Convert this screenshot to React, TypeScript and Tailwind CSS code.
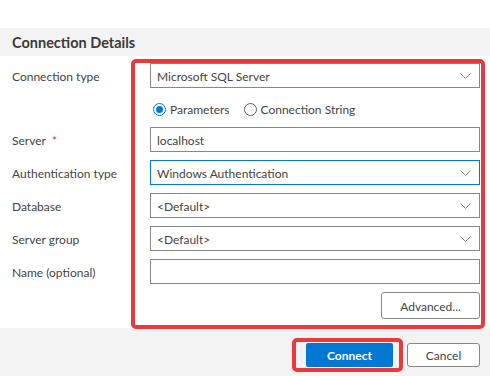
import React from "react";

const Chevron = () => (
  <svg width="11" height="6" viewBox="0 0 11 6" className="shrink-0">
    <path d="M0.5 0.5 L5.5 5.5 L10.5 0.5" fill="none" stroke="#8a8886" strokeWidth="1" />
  </svg>
);

const Select = ({ value, focused }: { value: string; focused?: boolean }) => (
  <div
    className={`h-[25px] w-[330px] flex items-center justify-between pl-[6px] pr-[8px] bg-white border ${
      focused ? "border-[#0078d4]" : "border-[#8a8886]"
    }`}
  >
    <span className="text-[12px] pt-[2px] text-[#444444]">{value}</span>
    <Chevron />
  </div>
);

const Input = ({ value }: { value?: string }) => (
  <div className="h-[25px] w-[330px] flex items-center pl-[6px] bg-white border border-[#8a8886]">
    <span className="text-[12px] pt-[2px] text-[#444444]">{value}</span>
  </div>
);

const Row = ({ label, children, req }: { label: string; children: React.ReactNode; req?: boolean }) => (
  <div className="flex items-center h-[25px]">
    <div className="w-[138px] text-[12px] pt-[2px] text-[#444444]">
      {label}
      {req && <span className="text-[#d13438] ml-[6px]">*</span>}
    </div>
    {children}
  </div>
);

export default function App() {
  return (
    <div
      className="relative w-[490px] h-[376px] bg-white overflow-hidden"
      style={{ fontFamily: 'Lato, "Noto Sans", sans-serif' }}
    >
      <div className="h-[28px]" />
      <div className="h-[28px] bg-[#f3f3f3] flex items-center pl-[12px]">
        <span className="text-[14.5px] pt-[2px] font-bold text-[#3b3a39]">Connection Details</span>
      </div>
      <div className="h-[272px] pl-[12px] pt-[7px] flex flex-col">
        <Row label="Connection type">
          <Select value="Microsoft SQL Server" />
        </Row>
        <div className="mt-[10px] mb-[7px] h-[22px] flex items-center pl-[141px]">
          <div className="flex items-center">
            <span className="w-[13px] h-[13px] rounded-full border border-[#0078d4] flex items-center justify-center">
              <span className="w-[7px] h-[7px] rounded-full bg-[#0078d4]" />
            </span>
            <span className="ml-[4px] pt-[2px] text-[12px] text-[#444444]">Parameters</span>
          </div>
          <div className="flex items-center ml-[14px]">
            <span className="w-[13px] h-[13px] rounded-full border border-[#605e5c]" />
            <span className="ml-[4px] pt-[2px] text-[12px] text-[#444444]">Connection String</span>
          </div>
        </div>
        <div className="flex flex-col gap-[8px]">
          <Row label="Server" req>
            <Input value="localhost" />
          </Row>
          <Row label="Authentication type">
            <Select value="Windows Authentication" focused />
          </Row>
          <Row label="Database">
            <Select value="<Default>" />
          </Row>
          <Row label="Server group">
            <Select value="<Default>" />
          </Row>
          <Row label="Name (optional)">
            <Input />
          </Row>
        </div>
        <div className="flex justify-end pr-[10px] mt-[8px]">
          <button className="w-[99px] h-[27px] pt-[2px] rounded-[3px] border border-[#8a8886] bg-white text-[12px] text-[#444444]">
            Advanced...
          </button>
        </div>
      </div>
      <div className="h-[48px] bg-[#f3f3f3] flex justify-end items-start pt-[15px] pr-[10px] gap-[14px]">
        <button className="w-[87px] h-[24px] pt-[2px] rounded-[2px] bg-[#0078d4] text-white text-[12px] font-bold">
          Connect
        </button>
        <button className="w-[73px] h-[24px] pt-[2px] rounded-[3px] border border-[#8a8886] bg-white text-[12px] text-[#444444]">
          Cancel
        </button>
      </div>

      <div className="absolute left-[131px] top-[59px] w-[354px] h-[270px] border-[4px] border-[#e8393b] rounded-[5px] pointer-events-none" />
      <div className="absolute left-[292px] top-[338px] w-[111px] h-[34px] border-[4px] border-[#e8393b] rounded-[5px] pointer-events-none" />
    </div>
  );
}
